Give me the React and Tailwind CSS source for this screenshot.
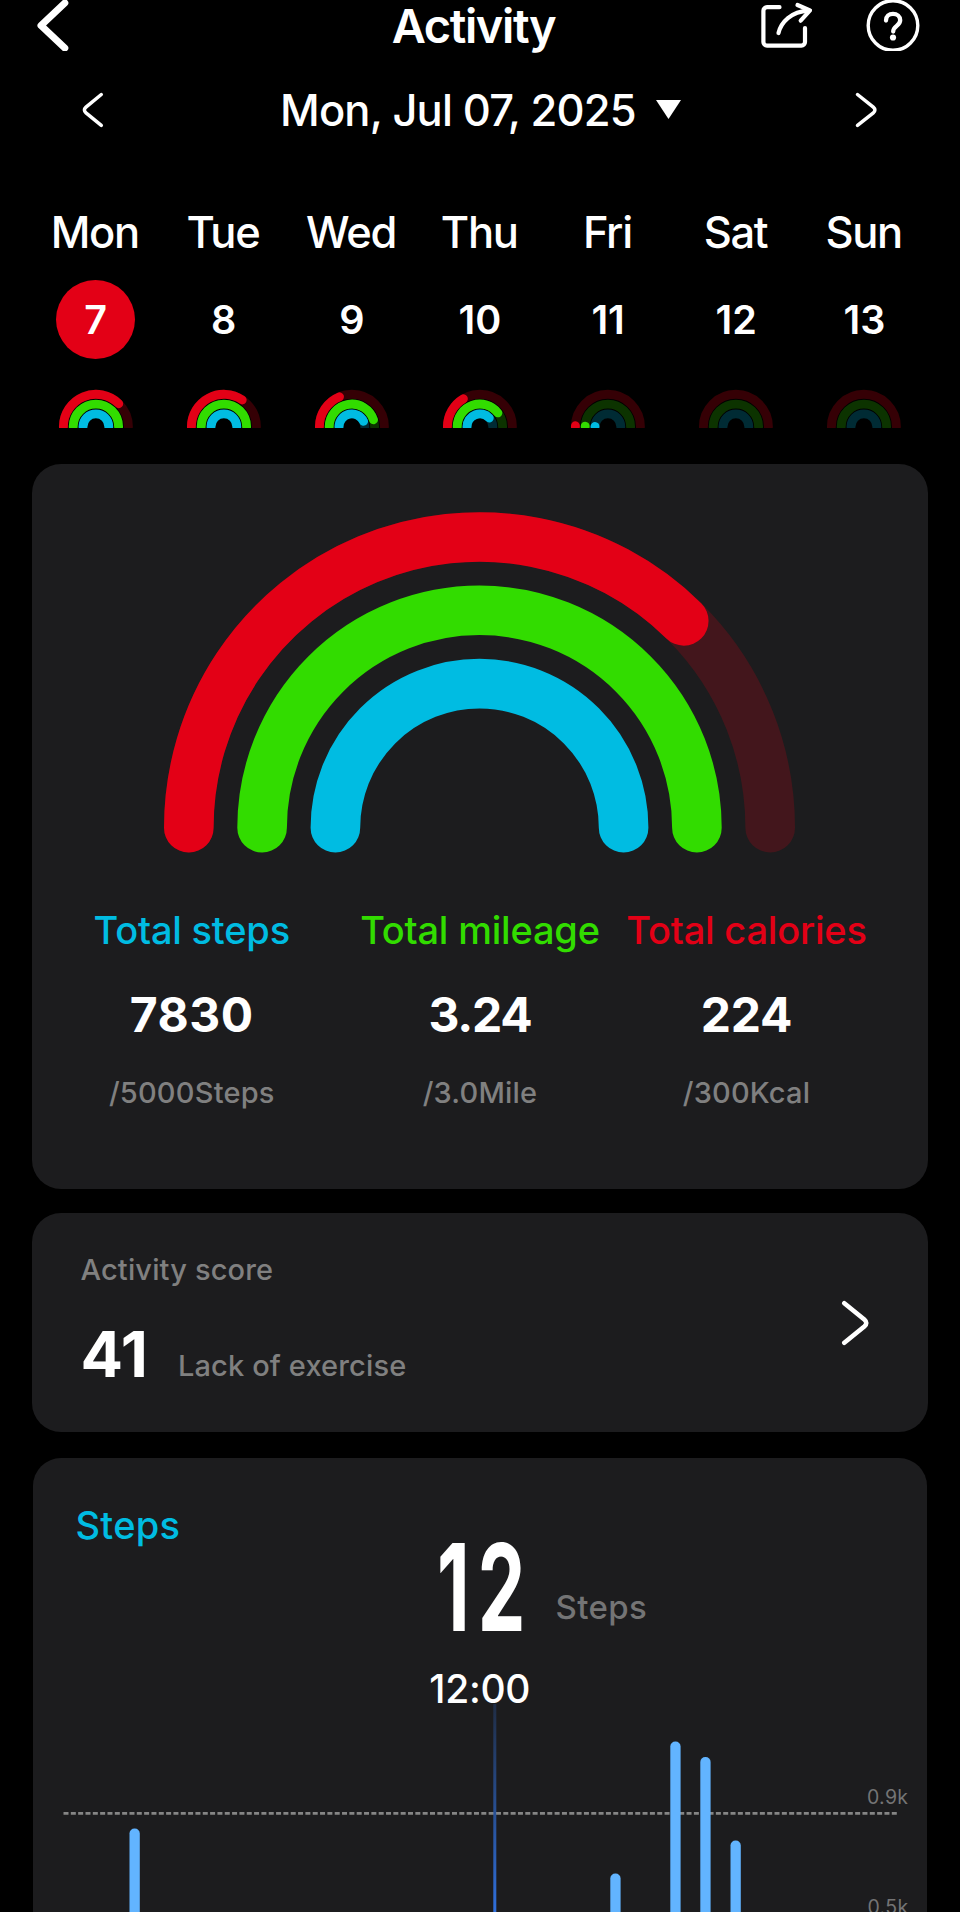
const RED = '#e30016'
const GREEN = '#32dc00'
const CYAN = '#00bce2'

const week = [
  { label: 'Mon', date: 7, rings: [0.748, 1, 1] },
  { label: 'Tue', date: 8, rings: [0.69, 1, 1] },
  { label: 'Wed', date: 9, rings: [0.375, 0.9, 0.86] },
  { label: 'Thu', date: 10, rings: [0.33, 0.79, 0.76] },
  { label: 'Fri', date: 11, rings: [0.01, 0.01, 0.01] },
  { label: 'Sat', date: 12, rings: [0, 0, 0] },
  { label: 'Sun', date: 13, rings: [0, 0, 0] },
]

const stats = [
  { label: 'Total steps', value: '7830', goal: '/5000Steps', color: 'text-[#00bce2]', tracking: 'tracking-[0.5px]' },
  { label: 'Total mileage', value: '3.24', goal: '/3.0Mile', color: 'text-[#32dc00]', tracking: 'tracking-[-1.2px]' },
  { label: 'Total calories', value: '224', goal: '/300Kcal', color: 'text-[#e30016]', tracking: 'tracking-[-0.3px]' },
]

const bars = [
  { x: 129, top: 1828.5 },
  { x: 609.8, top: 1873.5 },
  { x: 669.8, top: 1741.5 },
  { x: 699.8, top: 1757 },
  { x: 730, top: 1840.5 },
]

// half circle running left to right, cut off at `progress` (0..1)
function arcPath(cx, cy, r, progress) {
  const a = Math.PI * (1 - progress)
  const x = cx + r * Math.cos(a)
  const y = cy - r * Math.sin(a)
  return `M${cx - r} ${cy} A${r} ${r} 0 0 1 ${x} ${y}`
}

function Rainbow({ className, viewBox, cx, cy, radii, stroke, rings, trackOpacity }) {
  return (
    <svg className={className} viewBox={viewBox} fill="none" strokeWidth={stroke} strokeLinecap="round">
      {[RED, GREEN, CYAN].map((color, i) => (
        <g key={color} stroke={color}>
          {rings[i] < 1 && <path d={arcPath(cx, cy, radii[i], 1)} opacity={trackOpacity} />}
          {rings[i] > 0 && <path d={arcPath(cx, cy, radii[i], rings[i])} />}
        </g>
      ))}
    </svg>
  )
}

function Header() {
  return (
    <header className="grid h-[51px] grid-cols-[280px_387px_1fr] items-center">
      <svg className="ml-[34px] h-[51px] w-[38px]" viewBox="34 0 38 51" fill="none" stroke="#fff" strokeWidth="7" strokeLinecap="round" strokeLinejoin="round">
        <path d="M64.8 3 41 25.5l23.8 22.5" />
      </svg>
      <h1 className="text-center text-[47px] leading-[51px] font-semibold tracking-[-1.4px]">Activity</h1>
      <div className="flex items-center gap-[52px] pl-[91px]">
        <svg className="h-[51px] w-[56px]" viewBox="758 0 56 51" fill="none" stroke="#fff" strokeWidth="4.2" strokeLinecap="round" strokeLinejoin="round">
          <path d="M779.5 7.2H767a3.6 3.6 0 0 0-3.6 3.6V42a3.6 3.6 0 0 0 3.6 3.6h34.4A3.6 3.6 0 0 0 805 42V28" />
          <path d="M778.5 33c2.6-10.5 12.5-21.5 30-22.3" />
          <path d="m797.5 5 12.5 5.4-9.3 10.3" />
        </svg>
        <svg className="h-[51px] w-[54px]" viewBox="866.5 0 54 51" fill="none" stroke="#fff" strokeLinecap="round">
          <circle cx="893.5" cy="25.5" r="24.8" strokeWidth="3.4" />
          <path d="M886.5 20.5c0-4 3-6.6 7-6.6s7.2 2.6 7.2 6.4c0 5.4-7 5.7-7 11.2" strokeWidth="4.3" />
          <circle cx="893.5" cy="37.5" r="3.1" fill="#fff" stroke="none" />
        </svg>
      </div>
    </header>
  )
}

function DatePicker() {
  return (
    <div className="grid h-[117px] grid-cols-[280px_400.5px_1fr] items-center">
      <svg className="ml-[79px] h-[40px] w-[26px]" viewBox="79 89.5 26 40" fill="none" stroke="#fff" strokeWidth="3.5" strokeLinecap="round">
        <path d="M101.3 94 86 106.6q-3.2 2.9 0 5.8L101.3 124.8" />
      </svg>
      <div className="flex items-center justify-between">
        <span className="text-[43.5px] leading-[52px] font-medium tracking-[-0.82px] whitespace-nowrap">Mon, Jul 07, 2025</span>
        <svg className="h-[19px] w-[25px]" viewBox="0 0 25 19" fill="#fff">
          <path d="M0 0h25L12.5 19z" />
        </svg>
      </div>
      <svg className="ml-[172px] h-[40px] w-[26px]" viewBox="853 89.5 26 40" fill="none" stroke="#fff" strokeWidth="3.5" strokeLinecap="round">
        <path d="M857.5 94 873.3 106.6q3.2 2.9 0 5.8L857.5 124.8" />
      </svg>
    </div>
  )
}

function WeekStrip() {
  return (
    <div className="grid grid-cols-7 px-[31.5px] pt-[42px]">
      {week.map((day) => (
        <div key={day.label} className="flex flex-col items-center">
          <span className="mr-[1.5px] text-[43.5px] leading-[45px] font-medium tracking-[-1.3px]">{day.label}</span>
          <span
            className={
              day.date === 7
                ? 'mt-[25px] size-[79px] rounded-full bg-[#e30016] text-center text-[39.5px] leading-[81px] font-semibold'
                : 'mt-[25px] size-[79px] text-center text-[39.5px] leading-[81px] font-semibold'
            }
          >
            {day.date}
          </span>
          <Rainbow
            className="mt-[30px] h-[39px] w-[76px]"
            viewBox="0 0 76 39"
            cx={37.9}
            cy={37.8}
            radii={[32.5, 22.7, 12.9]}
            stroke={8.9}
            rings={day.rings}
            trackOpacity={0.23}
          />
        </div>
      ))}
    </div>
  )
}

function SummaryCard() {
  return (
    <section className="mt-[36px] mr-[32px] ml-[31.5px] h-[725px] rounded-[29px] bg-[#1c1c1e] pt-[46px]">
      <Rainbow
        className="ml-[128.5px] h-[346px] w-[640px]"
        viewBox="160 510 640 346"
        cx={479.5}
        cy={827.7}
        radii={[290.7, 217.4, 144.1]}
        stroke={49.6}
        rings={[0.748, 1, 1]}
        trackOpacity={0.2}
      />
      <div className="mt-[49px] grid grid-cols-[320.5px_256px_277px]">
        {stats.map((s) => (
          <div key={s.label} className="flex flex-col items-center whitespace-nowrap">
            <span className={`text-[38px] leading-[50px] font-medium tracking-[-0.2px] ${s.color}`}>{s.label}</span>
            <span className={`mt-[30px] text-[48px] leading-[60px] font-bold ${s.tracking}`}>{s.value}</span>
            <span className="mt-[28px] text-[29px] leading-[40px] font-[460] tracking-[0.2px] text-[#808080]">{s.goal}</span>
          </div>
        ))}
      </div>
    </section>
  )
}

function ScoreCard() {
  return (
    <section className="mt-[24px] mr-[32px] ml-[31.5px] flex h-[219px] items-center justify-between rounded-[29px] bg-[#1c1c1e] pr-[57px] pl-[49px]">
      <div className="pb-[1px]">
        <p className="text-[29px] leading-[40px] font-[460] tracking-[0.15px] text-[#808080]">Activity score</p>
        <div className="mt-[24px] flex items-baseline gap-[30px]">
          <span className="text-[63px] leading-[80px] font-bold">41</span>
          <span className="-translate-y-px text-[29px] leading-[40px] font-[460] tracking-[0.15px] text-[#808080]">Lack of exercise</span>
        </div>
      </div>
      <svg className="h-[46px] w-[30px]" viewBox="841 1299.5 30 46" fill="none" stroke="#fff" strokeWidth="4.6" strokeLinecap="round">
        <path d="M844.3 1302.7 864.3 1319q4 3.5 0 7l-20 16.3" />
      </svg>
    </section>
  )
}

function StepsCard() {
  return (
    <section className="mt-[26px] mr-[33px] ml-[32.5px] rounded-t-[28px] bg-[#1c1c1e] pt-[42px]">
      <h2 className="pl-[43px] text-[38px] leading-[50px] font-medium tracking-[0.3px] text-[#00bce2]">Steps</h2>
      <div className="flex h-[123px] items-start pl-[404px]">
        <span className="mt-[-22px] w-[92px] origin-left scale-x-[0.625] text-[121px] leading-[118px] font-bold tracking-[13px]">12</span>
        <span className="ml-[27px] mt-[37px] text-[33px] leading-[40px] font-medium tracking-[0.4px] text-[#747475]">Steps</span>
      </div>
      <p className="text-center text-[39px] leading-[31px] font-medium tracking-[-0.3px]">12:00</p>
      <svg className="h-[209px] w-full" viewBox="32.5 1704 894.5 209">
        <defs>
          <linearGradient id="cursor" x1="0" y1="1703" x2="0" y2="1912" gradientUnits="userSpaceOnUse">
            <stop offset="0" stopColor="#2f6fdc" stopOpacity="0.2" />
            <stop offset="1" stopColor="#2f6fdc" />
          </linearGradient>
        </defs>
        <path d="M63 1813.4H896.5" stroke="#858585" strokeWidth="2.7" strokeDasharray="5 2.33" />
        <rect x="492.8" y="1703" width="3" height="209" fill="url(#cursor)" />
        {bars.map((bar) => (
          <rect key={bar.x} x={bar.x} y={bar.top} width="10.3" height="200" rx="5" fill="#62b4ff" />
        ))}
        <text x="866.5" y="1803.8" fontSize="19.5" letterSpacing="0.3" fill="#747475">0.9k</text>
        <text x="867" y="1914" fontSize="19.5" letterSpacing="0.3" fill="#747475">0.5k</text>
      </svg>
    </section>
  )
}

export default function App() {
  return (
    <main className="h-[1912px] w-[960px] overflow-hidden bg-black font-['Inter',sans-serif] text-white">
      <Header />
      <DatePicker />
      <WeekStrip />
      <SummaryCard />
      <ScoreCard />
      <StepsCard />
    </main>
  )
}
